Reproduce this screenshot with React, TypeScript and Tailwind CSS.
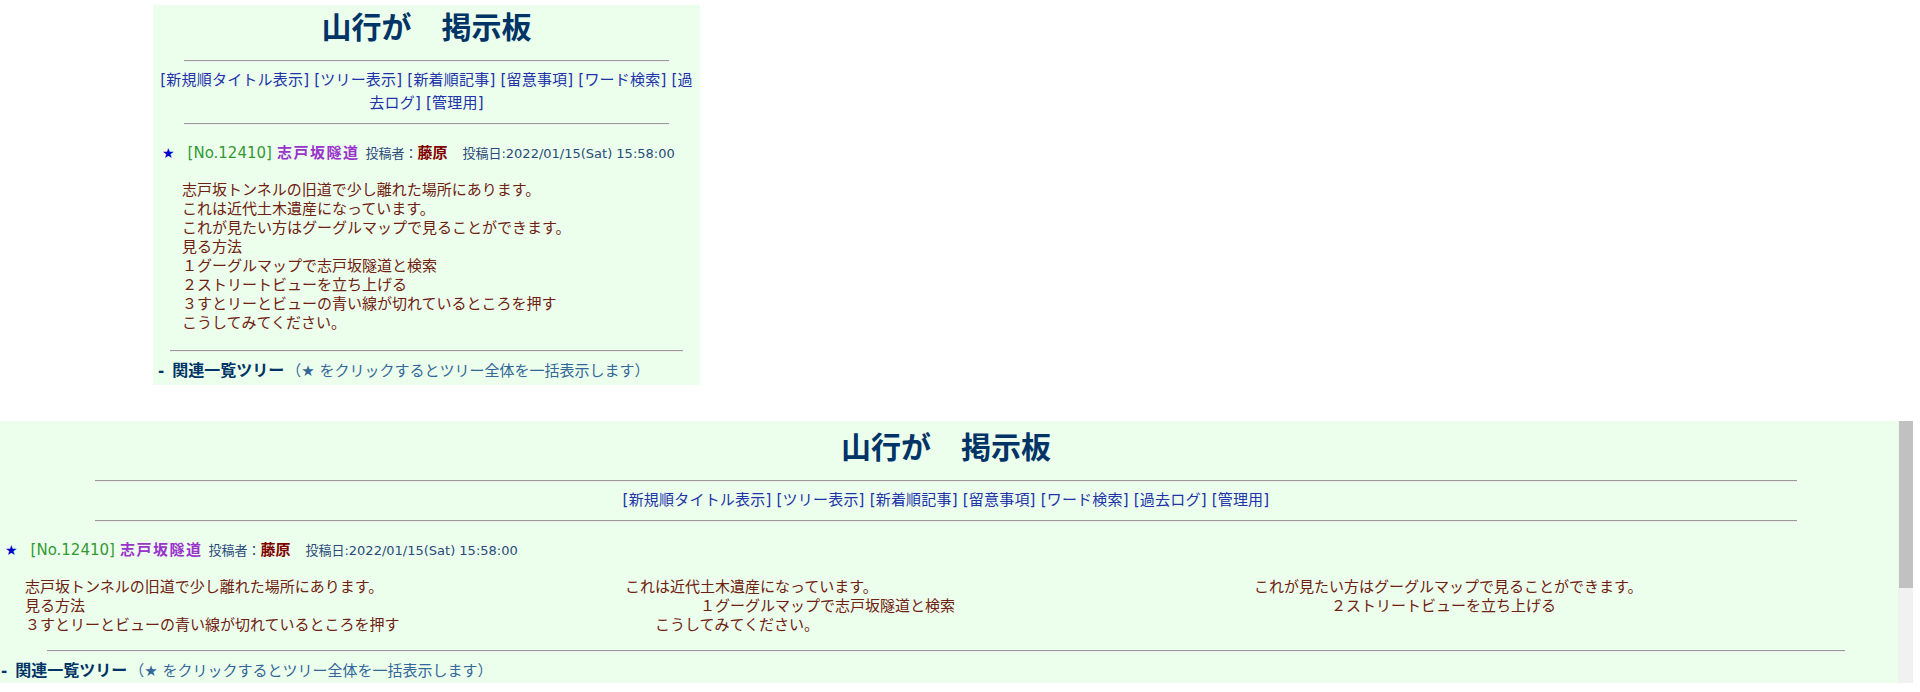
import React from 'react';

const navItems = ['新規順タイトル表示', 'ツリー表示', '新着順記事', '留意事項', 'ワード検索', '過去ログ', '管理用'];

const bodyLines = [
  '志戸坂トンネルの旧道で少し離れた場所にあります。',
  'これは近代土木遺産になっています。',
  'これが見たい方はグーグルマップで見ることができます。',
  '見る方法',
  '１グーグルマップで志戸坂隧道と検索',
  '２ストリートビューを立ち上げる',
  '３すとリーとビューの青い線が切れているところを押す',
  'こうしてみてください。',
];

const Rule = ({ className }: { className: string }) => (
  <hr className={`mx-auto border-t border-b border-t-[#9a9a9a] border-b-[#eeeeee] ${className}`} />
);

const Header = () => (
  <>
    <h1 className="text-center text-[30px] leading-[36px] font-bold text-[#003366]">山行が　掲示板</h1>
    <Rule className="mt-[14px] w-[90%]" />
    <div className="mt-[7px] text-center text-[15px] leading-[23px] tracking-[0.2px] text-[#2233aa]">
      {navItems.map((item, i) => (
        <React.Fragment key={item}>
          {i > 0 && ' '}
          <a href="#" className="text-[#2233aa]">[{item}]</a>
        </React.Fragment>
      ))}
    </div>
    <Rule className="mt-[8px] w-[90%]" />
  </>
);

const PostMeta = () => (
  <div className="mt-[18px] h-[19px] whitespace-nowrap leading-[19px]">
    <span className="ml-[5px] text-[14px] text-[#0000cc]">★</span>
    <span className="ml-[13px] text-[15px] text-[#339933]">[No.12410]</span>
    <span className="ml-[5px] text-[15px] font-bold tracking-[1.5px] text-[#9933cc]">志戸坂隧道</span>
    <span className="ml-[6px] text-[13px] text-[#2a4a7a]">投稿者：</span>
    <span className="text-[15px] font-bold text-[#800000]">藤原</span>
    <span className="ml-[15px] text-[13px] text-[#2a4a7a]">投稿日:2022/01/15(Sat) 15:58:00</span>
  </div>
);

const Related = () => (
  <div className="mt-[9px] h-[19px] whitespace-nowrap leading-[19px]">
    <span className="ml-px text-[15px] font-bold text-[#003366]">-</span>
    <span className="ml-[8px] text-[16px] font-bold text-[#003366]">関連一覧ツリー</span>
    <span className="ml-[2px] text-[15px] text-[#336699]">（★ をクリックするとツリー全体を一括表示します）</span>
  </div>
);

// narrow window: every sentence sits on its own line
const NarrowPanel = () => (
  <div className="ml-[153px] mt-[5px] w-[547px] bg-[#ecffec] px-[4px] pt-[5px] pb-[5px]">
    <Header />
    <PostMeta />
    <div className="mt-[19px] pl-[25px] text-[15px] leading-[19px] text-[#702010]">
      {bodyLines.map((line) => (
        <div key={line}>{line}</div>
      ))}
    </div>
    <Rule className="mt-[17px] w-[95%]" />
    <Related />
  </div>
);

// wide window: the padded sentences run side by side
const WidePanel = () => (
  <div className="mt-[36px] flex h-[262px] w-[1913px]">
    <div className="min-w-0 flex-1 overflow-hidden bg-[#ecffec] pt-[9px] pr-[6px]">
      <Header />
      <PostMeta />
      <div className="mt-[19px] pl-[25px] whitespace-nowrap text-[15px] leading-[19px] text-[#702010]">
        <div className="flex">
          <span className="w-[600px] shrink-0">{bodyLines[0]}</span>
          <span className="w-[629px] shrink-0">{bodyLines[1]}</span>
          <span>{bodyLines[2]}</span>
        </div>
        <div className="flex">
          <span className="w-[675px] shrink-0">{bodyLines[3]}</span>
          <span className="w-[631px] shrink-0">{bodyLines[4]}</span>
          <span>{bodyLines[5]}</span>
        </div>
        <div className="flex">
          <span className="w-[630px] shrink-0">{bodyLines[6]}</span>
          <span>{bodyLines[7]}</span>
        </div>
      </div>
      <Rule className="mt-[15px] w-[95%]" />
      <Related />
    </div>
    <div className="flex w-[15px] flex-col bg-[#f1f1f1]">
      <div className="ml-px h-[167px] bg-[#c1c1c1]"></div>
    </div>
  </div>
);

const App = () => {
  return (
    <div className="h-[692px] w-[1920px] overflow-hidden bg-white font-['DejaVu_Sans','Noto_Sans_CJK_JP',sans-serif]">
      <NarrowPanel />
      <WidePanel />
    </div>
  );
};

export default App;
